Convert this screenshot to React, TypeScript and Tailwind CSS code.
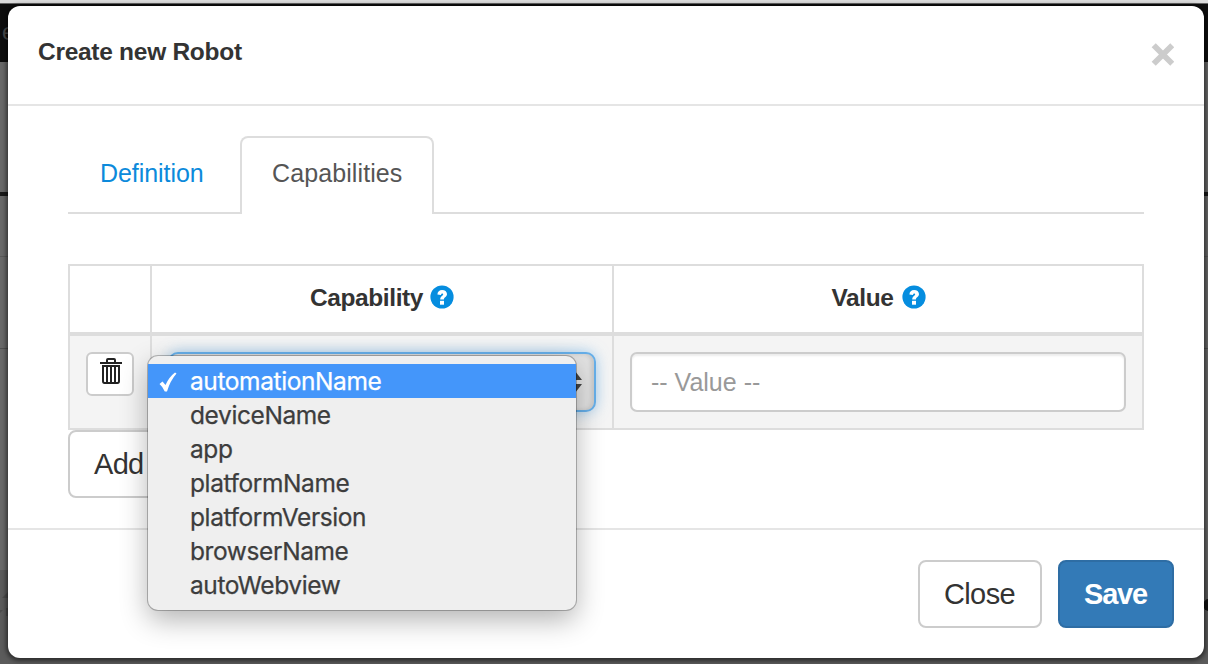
import React from "react";

const options = ["automationName", "deviceName", "app", "platformName", "platformVersion", "browserName", "autoWebview"];

function Help() {
  return (
    <svg className="-mt-1 h-6 w-6" viewBox="0 0 24 24">
      <circle cx="12" cy="12" r="11.6" fill="#058ddf" />
      <path d="M7.4 9.6C7.6 6.4 9.4 4.9 12.1 4.9C14.9 4.9 17 6.5 17 9C17 12 13.9 12.1 13.9 14.6H10.2C10.2 11.1 13.2 10.8 13.2 9.2C13.2 8.1 11.3 8 11 9.9Z" fill="#fff" />
      <rect x="10" y="15.8" width="4" height="3.9" fill="#fff" />
    </svg>
  );
}

function Trash() {
  return (
    <svg className="ml-0.5 h-7 w-[22px] shrink-0" viewBox="0 0 22 28" fill="none" stroke="#222" strokeWidth="2">
      <path d="M0 6H22M7 6V3Q7 2 8 2H14Q15 2 15 3V6" />
      <path d="M3 9H19V24Q19 26 17.5 26H4.5Q3 26 3 24ZM7 9V26M11 9V26M15 9V26" />
    </svg>
  );
}

function Backdrop() {
  return (
    <div className="absolute inset-0 flex flex-col overflow-hidden bg-[#686868]">
      <div className="h-[3px] bg-[#dcdcdc]" />
      <div className="h-px bg-[#666]" />
      <div className="h-[58px] bg-[#0e0e0e] pl-0.5 pt-[13px] text-[24px] leading-[30px] text-[#4a4a4a]">e</div>
      <div className="h-[130px]" />
      <div className="h-1 bg-[#191919]" />
      <div className="h-[60px]" />
      <div className="h-px bg-[#585858]" />
      <div className="h-[91px]" />
      <div className="h-px bg-[#505050]" />
      <div className="h-[221px]" />
      <div className="flex flex-1 justify-between bg-[#5b5b5b] pt-[18px]">
        <svg className="h-10 w-3" viewBox="0 0 12 40" fill="#4c4c4c"><path d="M2 10L8 4V10ZM0 22H3L0 25ZM6 20H8V28H6Z" /></svg>
        <svg className="mt-2.5 h-3.5 w-1.5" viewBox="0 0 6 14" fill="#111"><circle cx="7" cy="7" r="6" /></svg>
      </div>
    </div>
  );
}

export default function App() {
  return (
    <div className="relative h-[664px] w-[1208px] overflow-hidden font-['Liberation_Sans',Arial,sans-serif] text-[#333]">
      <Backdrop />
      <div className="relative pl-2 pr-1 pt-1.5">
        <div className="flex h-[652px] flex-col rounded-[12px] bg-white shadow-[0_1px_4px_2px_rgba(0,0,0,0.5)]">
          <header className="flex h-[100px] items-start justify-between border-b-2 border-[#e5e5e5] pl-[30px] pr-[30px] pt-[30px]">
            <h1 className="text-[24.5px] font-bold leading-8 tracking-[-0.28px]">Create new Robot</h1>
            <svg className="mt-[7px] h-[23px] w-[23px]" viewBox="0 0 23 23" stroke="#ccc" strokeWidth="5.8">
              <path d="M2.7 2.2L21.3 20.8M21.3 2.2L2.7 20.8" />
            </svg>
          </header>
          <main className="h-[422px] px-[60px] pt-[30px]">
            <nav className="flex h-[78px] items-end text-[25px]">
              <div className="flex h-[78px] w-[172px] items-center border-b-2 border-[#ddd] pl-8 tracking-[-0.05px] text-[#0c8adb]">Definition</div>
              <div className="flex h-[78px] w-[194px] items-center rounded-t-[8px] border-2 border-b-0 border-[#ddd] pb-1 pl-[30px] tracking-[0.1px] text-[#555]">Capabilities</div>
              <div className="h-[78px] flex-1 border-b-2 border-[#ddd]" />
            </nav>
            <div className="mt-[50px] flex flex-col border-2 border-[#ddd]">
              <div className="flex h-[66px] text-[24.5px] font-bold tracking-[-0.4px]">
                <div className="w-[82px] border-r-2 border-[#ddd]" />
                <div className="flex w-[462px] items-center justify-center gap-[7px] border-r-2 border-[#ddd] pb-px">Capability<Help /></div>
                <div className="flex flex-1 items-center justify-center gap-2 pb-px pl-px">Value<Help /></div>
              </div>
              <div className="flex h-[96px] border-t-4 border-[#ddd] bg-[#f4f4f4]">
                <div className="w-[82px] border-r-2 border-[#ddd] pl-4 pt-4">
                  <button className="flex h-11 w-12 items-start justify-center rounded-[6px] border-2 border-[#ccc] bg-white pt-[3px]"><Trash /></button>
                </div>
                <div className="w-[462px] border-r-2 border-[#ddd] px-4 pt-4">
                  <div className="flex h-[60px] items-center justify-end rounded-[10px] border-2 border-[#66afe9] bg-[#e3e3e3] pr-3 shadow-[0_0_14px_rgba(102,175,233,0.6),inset_-3px_0_4px_rgba(0,0,0,0.12)]">
                    <svg className="h-[22px] w-[14px]" viewBox="0 0 14 22" fill="#444"><path d="M7 0L14 9H0ZM7 22L14 13H0Z" /></svg>
                  </div>
                </div>
                <div className="flex-1 px-4 pt-4">
                  <div className="flex h-[60px] items-center rounded-[7px] border-2 border-[#ccc] bg-white pl-[19px] pt-px text-[25px] text-[#999] shadow-[inset_0_2px_2px_rgba(0,0,0,0.075)]">-- Value --</div>
                </div>
              </div>
            </div>
            <button className="flex h-[68px] w-[140px] items-center rounded-[8px] border-2 border-[#ccc] bg-white pl-6 pt-0.5 text-[29px] tracking-[-0.7px]">Add</button>
          </main>
          <footer className="flex flex-1 items-start justify-end gap-4 border-t-2 border-[#e5e5e5] pr-[30px] pt-[30px] text-[29px]">
            <button className="h-[68px] w-[124px] rounded-[8px] border-2 border-[#ccc] bg-white pr-px pt-0.5 tracking-[-0.6px]">Close</button>
            <button className="h-[68px] w-[116px] rounded-[8px] border-2 border-[#2e6da4] bg-[#337ab7] pr-px pt-0.5 font-bold tracking-[-1.2px] text-white">Save</button>
          </footer>
        </div>
      </div>
      <div className="absolute left-[148px] top-[356px] h-[254px] w-[428px] rounded-[10px] bg-[#efefef] pt-2 font-[Inter,sans-serif] text-[24.5px] tracking-[-0.4px] text-[#3d3d3d] shadow-[0_0_0_1px_rgba(0,0,0,0.25),0_10px_28px_rgba(0,0,0,0.3)] [-webkit-text-stroke:0.25px_currentColor]">
        {options.map((o, i) => (
          <div key={o} className={i === 0 ? "flex h-[34px] items-center bg-[#4496fa] text-white" : "flex h-[34px] items-center"}>
            <div className="w-[42px] pl-[11px]">
              {i === 0 && <svg className="mt-px h-5 w-[18px]" viewBox="0 0 18 20"><path d="M0.5 12L3.5 9.5L6.5 13Q10 5 16 0.5L17.5 1.5Q11 9 8 19.5H5.8Q4 15 0.5 12Z" fill="#fff" /></svg>}
            </div>
            <span>{o}</span>
          </div>
        ))}
      </div>
    </div>
  );
}
